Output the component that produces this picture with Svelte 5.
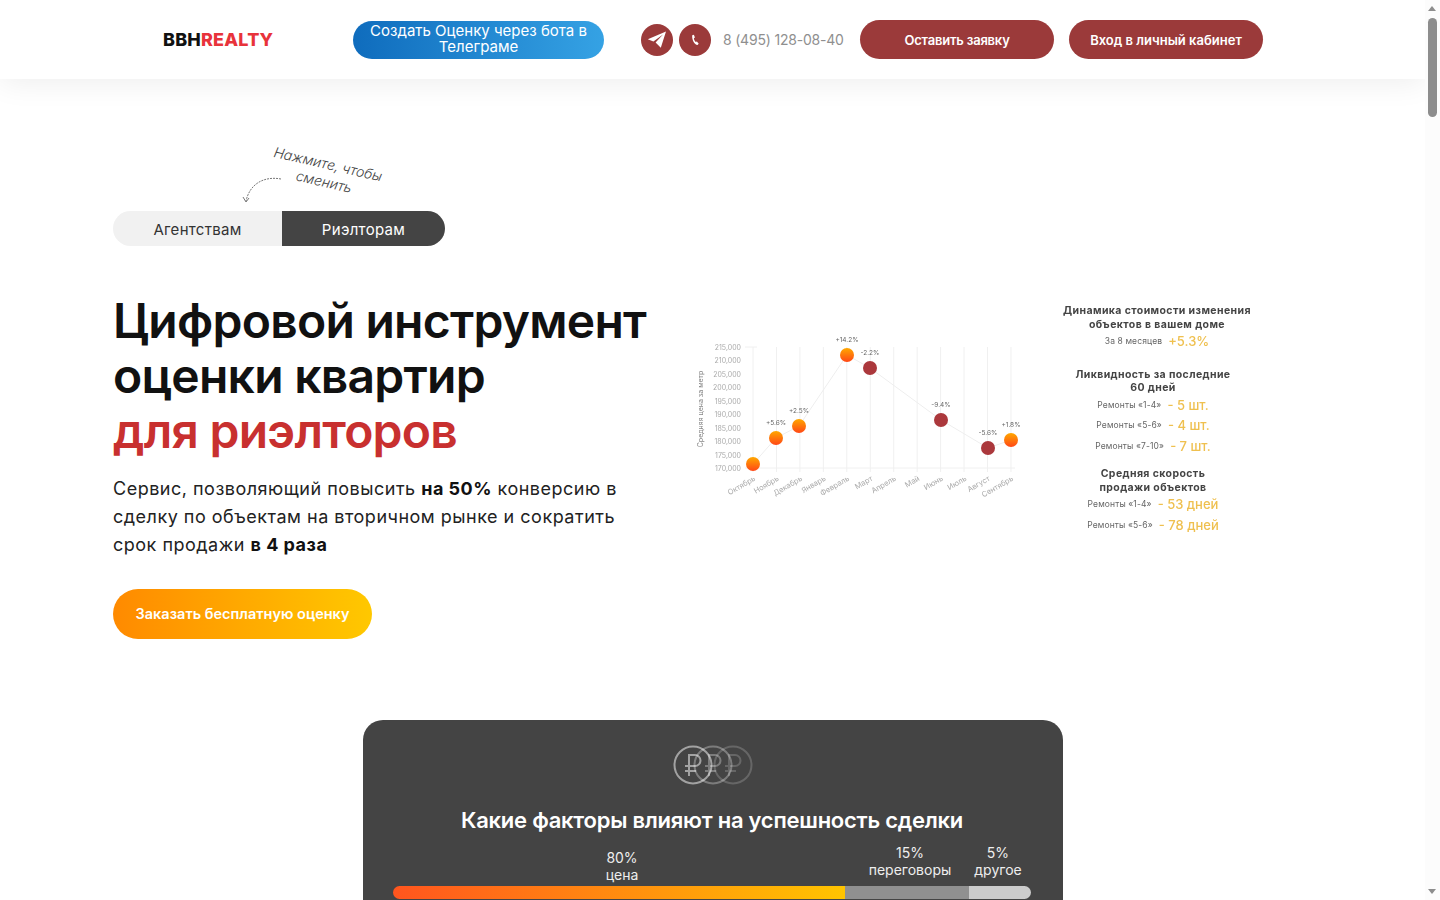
<script>
	let audience = $state('realtors');

	const yLabels = ['215,000', '210,000', '205,000', '200,000', '195,000', '190,000', '185,000', '180,000', '175,000', '170,000'];
	const months = ['Октябрь', 'Ноябрь', 'Декабрь', 'Январь', 'Февраль', 'Март', 'Апрель', 'Май', 'Июнь', 'Июль', 'Август', 'Сентябрь'];
	const points = [
		{ x: 58, y: 129, up: true, label: '' },
		{ x: 81, y: 103, up: true, label: '+5.6%' },
		{ x: 104, y: 91, up: true, label: '+2.5%' },
		{ x: 152, y: 20, up: true, label: '+14.2%' },
		{ x: 175, y: 33, up: false, label: '-2.2%' },
		{ x: 246, y: 85, up: false, label: '-9.4%' },
		{ x: 293, y: 113, up: false, label: '-5.6%' },
		{ x: 316, y: 105, up: true, label: '+1.8%' }
	];
	const liquidity = [
		['Ремонты «1-4»', '- 5 шт.'],
		['Ремонты «5-6»', '- 4 шт.'],
		['Ремонты «7-10»', '- 7 шт.']
	];
	const speed = [
		['Ремонты «1-4»', '- 53 дней'],
		['Ремонты «5-6»', '- 78 дней']
	];
</script>

<div class="page">
	<header>
		<div class="logo">BBH<span>REALTY</span></div>
		<a class="tg-btn" href="#bot">Создать Оценку через бота в Телеграме</a>
		<a class="round" href="#tg" aria-label="Telegram">
			<svg width="20" height="20" viewBox="0 0 20 20"><path d="M19 1.5 0.8 9.2l5.6 2.2L16 4.6 8.6 12.4l5.2 5.4z" fill="#fff" /></svg>
		</a>
		<a class="round second" href="#call" aria-label="Позвонить">
			<svg width="12" height="12" viewBox="0 0 12 12"><path d="M3.2 1.2 4.9.8l1 2.6-1 .9c.1 1.3.7 2.7 1.8 3.6l1.200-.5L9.700 9.700 8.500 11C5.400 10.800 2.700 5.600 3.200 1.200z" fill="#fff" /></svg>
		</a>
		<a class="phone" href="tel:84951280840">8 (495) 128-08-40</a>
		<button class="cta first">Оставить заявку</button>
		<button class="cta">Вход в личный кабинет</button>
	</header>

	<section class="hero">
		<div class="intro">
			<div class="switch-wrap">
				<div class="hint">Нажмите, чтобы<br />сменить</div>
				<svg class="hint-arrow" width="44" height="30" viewBox="0 0 44 30" fill="none" stroke="#777" stroke-width="1">
					<path d="M40 4C24 1 9 8 5 26" stroke-dasharray="2 1" />
					<path d="M2 22l3 5 3-4" />
				</svg>
				<div class="switch">
					<button class:active={audience === 'agencies'} class="left" onclick={() => (audience = 'agencies')}>Агентствам</button>
					<button class:active={audience === 'realtors'} class="right" onclick={() => (audience = 'realtors')}>Риэлторам</button>
				</div>
			</div>
			<h1>Цифровой инструмент<br />оценки квартир<br /><em>для риэлторов</em></h1>
			<p>Сервис, позволяющий повысить <b>на 50%</b> конверсию в сделку по объектам на вторичном рынке и сократить срок продажи <b>в 4 раза</b></p>
			<button class="order">Заказать бесплатную оценку</button>
		</div>

		<div class="insights">
			<svg class="chart" width="330" height="165" viewBox="0 0 330 165">
				<defs>
					<linearGradient id="hot" x1="0" y1="0" x2="0" y2="1">
						<stop offset="0" stop-color="#ffa800" />
						<stop offset="1" stop-color="#ff4716" />
					</linearGradient>
				</defs>
				<text class="axis-title" transform="translate(8 74) rotate(-90)" text-anchor="middle">Средняя цена за метр</text>
				{#each yLabels as label, i}
					<text class="tick" x="46" y={14.800 + i * 13.5} text-anchor="end">{label}</text>
				{/each}
				<line class="grid" x1="50" y1="133" x2="320" y2="133" />
				<line class="grid" x1="50" y1="12" x2="62" y2="12" />
				{#each months as month, i}
					<line class="grid" x1={58 + i * 23.45} y1="12" x2={58 + i * 23.45} y2="137" />
					<text class="tick month" transform="translate({61 + i * 23.45} 145) rotate(-30)" text-anchor="end">{month}</text>
				{/each}
				<polyline class="trend" points={points.map((p) => `${p.x},${p.y}`).join(' ')} />
				{#each points as p}
					<circle cx={p.x} cy={p.y} r="7" fill={p.up ? 'url(#hot)' : '#ab383c'} />
					<text class="delta" x={p.x} y={p.y - 13} text-anchor="middle">{p.label}</text>
				{/each}
			</svg>

			<div class="stats">
				<div class="block shifted">
					<h3>Динамика стоимости изменения<br />объектов в вашем доме</h3>
					<div class="row"><span>За 8 месяцев</span> <strong>+5.3%</strong></div>
				</div>
				<div class="block">
					<h3>Ликвидность за последние<br />60 дней</h3>
					{#each liquidity as [name, value]}
						<div class="row"><span>{name}</span> <strong>{value}</strong></div>
					{/each}
				</div>
				<div class="block">
					<h3>Средняя скорость<br />продажи объектов</h3>
					{#each speed as [name, value]}
						<div class="row"><span>{name}</span> <strong>{value}</strong></div>
					{/each}
				</div>
			</div>
		</div>
	</section>

	<section class="factors">
		<svg class="coins" width="82" height="42" viewBox="0 0 82 42" fill="none" stroke="#fff" stroke-width="2">
			<g opacity="0.18">
				<circle cx="61" cy="21" r="18.500" />
				<path d="M57 32V11h6a5.500 5.500 0 0 1 0 11H53M53 27h11" />
			</g>
			<g opacity="0.3">
				<circle cx="41" cy="21" r="18.500" />
				<path d="M37 32V11h6a5.500 5.500 0 0 1 0 11H33M33 27h11" />
			</g>
			<g opacity="0.5">
				<circle cx="21" cy="21" r="18.500" />
				<path d="M17 32V11h6a5.500 5.500 0 0 1 0 11H13M13 27h11" />
			</g>
		</svg>
		<h2>Какие факторы влияют на успешность сделки</h2>
		<div class="shares">
			<div class="share price"><span>80%</span><span>цена</span></div>
			<div class="share talks"><span>15%</span><span>переговоры</span></div>
			<div class="share other"><span>5%</span><span>другое</span></div>
		</div>
		<div class="bar">
			<i class="seg-price"></i>
			<i class="seg-talks"></i>
			<i class="seg-other"></i>
		</div>
	</section>

	<div class="scrollbar">
		<i class="arrow-up"></i>
		<i class="thumb"></i>
		<i class="arrow-down"></i>
	</div>
</div>

<style>
	:global(body) {
		margin: 0;
		background: #fff;
		font-family: Inter, 'Noto Sans', sans-serif;
		color: #111;
	}
	.page {
		position: relative;
		height: 900px;
		overflow: hidden;
		width: 1440px;
	}
	a {
		text-decoration: none;
	}
	button {
		border: 0;
		font-family: inherit;
		cursor: pointer;
	}

	header {
		display: flex;
		align-items: center;
		box-sizing: border-box;
		width: 1425px;
		height: 79px;
		padding-left: 163px;
		background: #fff;
		box-shadow: 0 4px 30px rgba(0, 0, 0, 0.07);
		position: relative;
	}
	.logo {
		width: 110px;
		margin-right: 80px;
		font-size: 18px;
		font-weight: 800;
		letter-spacing: 0.2px;
		color: #111;
		white-space: nowrap;
	}
	.logo span {
		color: #e8333b;
	}
	.tg-btn {
		display: flex;
		align-items: center;
		justify-content: center;
		box-sizing: border-box;
		width: 251px;
		height: 38px;
		margin-right: 37px;
		padding: 0 12px 1px;
		border-radius: 19px;
		background: linear-gradient(90deg, #0f6cbd, #35a2e4);
		color: #fff;
		font-size: 15px;
		line-height: 16.5px;
		text-align: center;
	}
	.round {
		display: flex;
		align-items: center;
		justify-content: center;
		width: 32px;
		height: 32px;
		border-radius: 50%;
		background: #9b3a3a;
	}
	.second {
		margin-left: 6px;
	}
	.phone {
		width: 137px;
		margin-left: 12px;
		color: #8f8f8f;
		font-size: 14px;
		letter-spacing: -0.2px;
		white-space: nowrap;
	}
	.cta {
		width: 194px;
		height: 39px;
		margin-left: 15px;
		padding-bottom: 1px;
		border-radius: 20px;
		background: #9b3a3a;
		color: #fff;
		font-size: 13px;
		font-weight: 600;
	}
	.cta.first {
		margin-left: 0;
		letter-spacing: -0.2px;
	}

	.hero {
		display: flex;
		padding: 132px 0 0 113px;
	}
	.intro {
		width: 582px;
		flex: none;
	}
	.switch-wrap {
		position: relative;
	}
	.hint {
		position: absolute;
		left: 149px;
		top: -56px;
		width: 128px;
		transform: rotate(13deg);
		font-size: 14px;
		line-height: 18px;
		font-style: italic;
		font-weight: 300;
		text-align: center;
		color: #444;
	}
	.hint-arrow {
		position: absolute;
		left: 128px;
		top: -36px;
	}
	.switch {
		display: flex;
		width: 332px;
		height: 35px;
		border-radius: 18px;
		overflow: hidden;
	}
	.switch button {
		padding-top: 2px;
		background: #f1f1f1;
		color: #333;
		font-size: 15px;
		letter-spacing: 0.3px;
	}
	.switch .left {
		width: 169px;
	}
	.switch .right {
		width: 163px;
	}
	.switch button.active {
		background: #444;
		color: #fff;
	}
	h1 {
		margin: 47px 0 17px;
		font-size: 48px;
		line-height: 55px;
		font-weight: 600;
		letter-spacing: -0.74px;
		white-space: nowrap;
	}
	h1 em {
		font-style: normal;
		color: #c8302f;
	}
	.intro p {
		width: 530px;
		margin: 0 0 30px;
		font-size: 18px;
		line-height: 28px;
		letter-spacing: 0.5px;
		color: #222;
	}
	.intro p b {
		font-weight: 700;
		color: #111;
	}
	.order {
		display: block;
		width: 259px;
		height: 50px;
		padding-bottom: 3px;
		border-radius: 25px;
		background: linear-gradient(90deg, #ff8a00, #ffc800);
		color: #fff;
		font-size: 14.500px;
		font-weight: 600;
		white-space: nowrap;
	}

	.insights {
		display: flex;
		align-items: flex-start;
		margin-top: 93px;
		filter: blur(0.25px);
	}
	.chart {
		flex: none;
		margin-top: 31px;
	}
	.tick {
		font-size: 7px;
		fill: #aaa;
	}
	.month {
		font-size: 7.500px;
		fill: #aaa;
	}
	.axis-title {
		font-size: 7px;
		fill: #888;
	}
	.grid {
		stroke: #f0f0f0;
		stroke-width: 1;
	}
	.trend {
		fill: none;
		stroke: #eee;
		stroke-width: 1;
	}
	.delta {
		font-size: 6.500px;
		fill: #666;
	}
	.stats {
		flex: none;
		width: 206px;
		margin-left: 25px;
		color: #444;
		text-align: center;
	}
	.block {
		margin-bottom: 11px;
	}
	.block.shifted {
		margin-bottom: 16px;
		padding-left: 8px;
	}
	.stats h3 {
		margin: 0;
		font-size: 10.500px;
		line-height: 13.5px;
		font-weight: 700;
		letter-spacing: 0.4px;
		white-space: nowrap;
	}
	.row {
		display: flex;
		justify-content: center;
		align-items: center;
		gap: 6px;
		height: 20.5px;
		white-space: nowrap;
	}
	.row span {
		font-size: 8.500px;
		letter-spacing: 0.12px;
		color: #666;
	}
	.row strong {
		font-size: 13px;
		font-weight: 500;
		color: #efc04f;
	}

	.factors {
		display: flex;
		flex-direction: column;
		box-sizing: border-box;
		width: 700px;
		height: 240px;
		margin: 81px 0 0 363px;
		padding: 24px 32px 0 30px;
		border-radius: 20px;
		background: #444;
		color: #fff;
	}
	.coins {
		align-self: center;
		margin-left: 2px;
	}
	.factors h2 {
		margin: 20px 0 0;
		font-size: 22px;
		line-height: 28px;
		font-weight: 600;
		letter-spacing: -0.25px;
		text-align: center;
		white-space: nowrap;
	}
	.shares {
		display: flex;
		height: 42px;
		margin-top: 10px;
		font-size: 14px;
		line-height: 17px;
		text-align: center;
		color: #eee;
	}
	.share {
		box-sizing: border-box;
	}
	.share span {
		display: block;
	}
	.price {
		width: 452px;
		padding: 5px 0 0 6px;
	}
	.talks {
		width: 124px;
		padding-left: 6px;
	}
	.other {
		width: 62px;
		padding-right: 4px;
	}
	.bar {
		display: flex;
		height: 13px;
		border-radius: 7px;
		overflow: hidden;
	}
	.bar i {
		display: block;
	}
	.seg-price {
		width: 452px;
		background: linear-gradient(90deg, #ff551e, #ffc400);
	}
	.seg-talks {
		width: 124px;
		background: #909090;
	}
	.seg-other {
		width: 62px;
		background: #ccc;
	}

	.scrollbar {
		position: absolute;
		top: 0;
		right: 0;
		bottom: 0;
		width: 15px;
		background: #fcfcfc;
	}
	.thumb {
		position: absolute;
		left: 3px;
		top: 18px;
		width: 9px;
		height: 99px;
		border-radius: 5px;
		background: #8d8d8d;
	}
	.arrow-up,
	.arrow-down {
		position: absolute;
		left: 3px;
		width: 0;
		height: 0;
		border-left: 4.500px solid transparent;
		border-right: 4.500px solid transparent;
	}
	.arrow-up {
		top: 6px;
		border-bottom: 5px solid #8d8d8d;
	}
	.arrow-down {
		bottom: 6px;
		border-top: 5px solid #8d8d8d;
	}
</style>
